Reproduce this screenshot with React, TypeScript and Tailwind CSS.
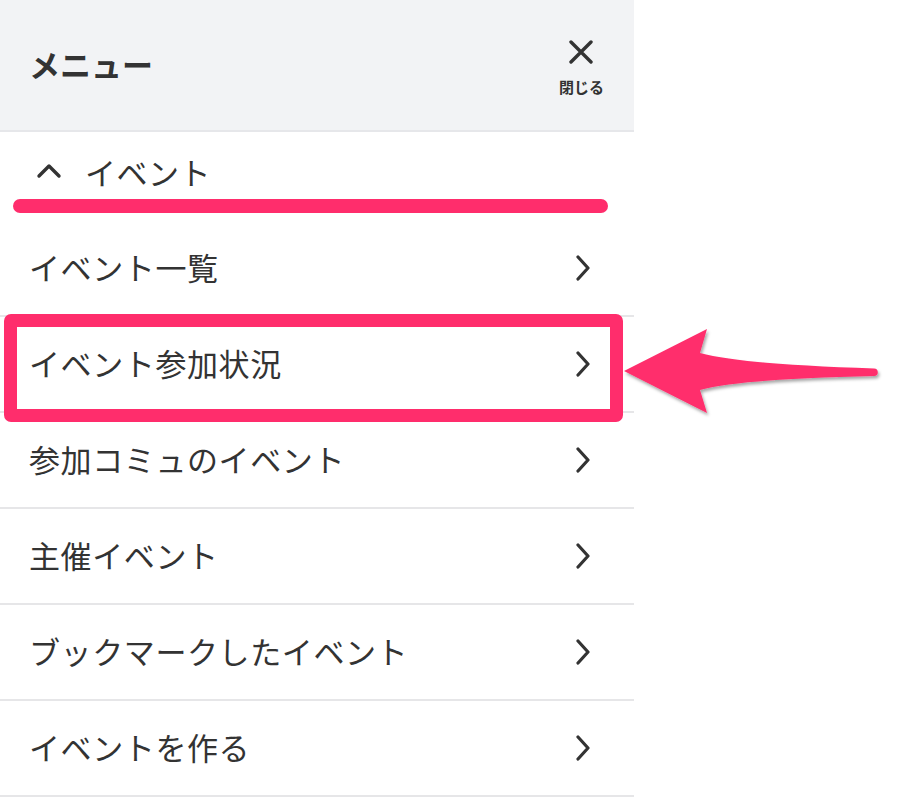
const ITEMS = [
  "イベント一覧",
  "イベント参加状況",
  "参加コミュのイベント",
  "主催イベント",
  "ブックマークしたイベント",
  "イベントを作る",
];

function ChevronRight() {
  return (
    <svg width="16" height="26" viewBox="0 0 16 26" fill="none" className="shrink-0">
      <path d="M3 2 L13 13 L3 24" stroke="#333" strokeWidth="3.2" strokeLinecap="round" strokeLinejoin="round" />
    </svg>
  );
}

function ChevronUp() {
  return (
    <svg width="26" height="16" viewBox="0 0 26 16" fill="none">
      <path d="M3 13 L13 3 L23 13" stroke="#333" strokeWidth="3.4" strokeLinecap="round" strokeLinejoin="round" />
    </svg>
  );
}

function CloseIcon() {
  return (
    <svg width="24" height="24" viewBox="0 0 24 24" fill="none">
      <path d="M2 2 L22 22 M22 2 L2 22" stroke="#333" strokeWidth="3.4" strokeLinecap="round" />
    </svg>
  );
}

function PointerArrow() {
  return (
    <svg
      width="290"
      height="110"
      viewBox="0 0 290 110"
      className="absolute left-[610px] top-[320px] pointer-events-none"
    >
      <defs>
        <filter id="arrowShadow" x="-10%" y="-20%" width="130%" height="150%">
          <feDropShadow dx="1.5" dy="2.5" stdDeviation="1.5" floodColor="#000" floodOpacity="0.35" />
        </filter>
      </defs>
      <path
        d="M14 51 L97 9 L90 33 C120 41 180 46 264 48.5 A3.8 3.8 0 0 1 264 56.1 C180 58 120 62 90 70 L97 93 Z"
        fill="#ff2d6c"
        filter="url(#arrowShadow)"
      />
    </svg>
  );
}

export default function App() {
  return (
    <div
      className="relative w-[920px] h-[798px] bg-white text-[#333] overflow-hidden"
      style={{ fontFamily: '"Noto Sans CJK JP", "Noto Sans", sans-serif' }}
    >
      <div className="w-[634px]">
        {/* Header */}
        <div className="h-[132px] bg-[#f2f3f5] border-b-2 border-[#e6e7ea] flex items-center justify-between pl-[29px] pr-[30px]">
          <h2 className="text-[31px] font-bold leading-none -mt-[3px]">メニュー</h2>
          <button className="flex flex-col items-center pt-[6px]">
            <CloseIcon />
            <span className="text-[15px] font-bold leading-[20px] mt-[13px]">閉じる</span>
          </button>
        </div>

        {/* Section */}
        <div className="h-[89px] flex flex-col">
          <div className="h-[40px] mt-[19px] flex items-center pl-[36px]">
            <ChevronUp />
            <span className="ml-[23px] text-[31px] leading-none tracking-[0.5px]">イベント</span>
          </div>
          <div className="ml-[13px] w-[595px] h-[14px] mt-[8px] rounded-full bg-[#ff2d6c]" />
        </div>

        {/* Items */}
        <ul>
          {ITEMS.map((item) => (
            <li
              key={item}
              className="h-[96px] border-b-2 border-[#e6e6e8] flex items-center justify-between pl-[29px] pr-[43px]"
            >
              <span className="text-[31px] leading-none tracking-[0.6px] -mt-[3px]">{item}</span>
              <ChevronRight />
            </li>
          ))}
        </ul>
      </div>

      {/* Highlight annotation */}
      <div className="absolute left-[4px] top-[314px] w-[619px] h-[108px] border-[13px] border-[#ff2d6c] rounded-[7px] pointer-events-none" />
      <PointerArrow />
    </div>
  );
}
